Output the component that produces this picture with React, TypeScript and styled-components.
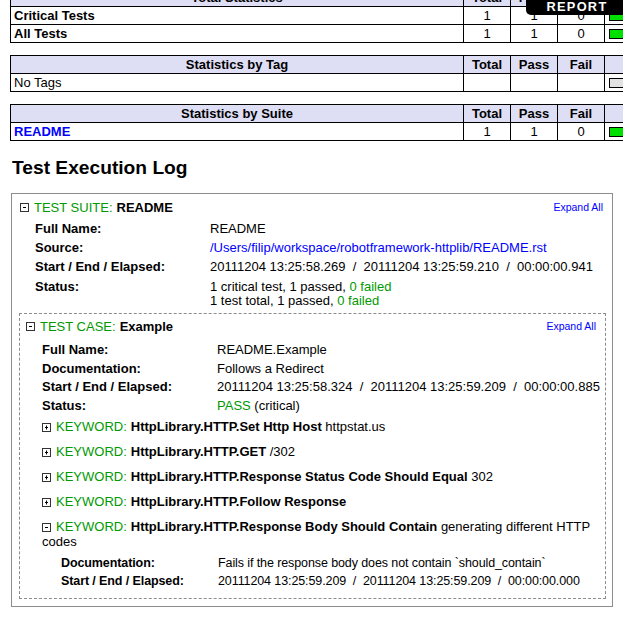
import React from "react";
import styled, { createGlobalStyle } from "styled-components";

const Global = createGlobalStyle`
  html, body { margin: 0; padding: 0; overflow: hidden; background: #fff; }
  body { font-family: "Liberation Sans", Arial, Helvetica, sans-serif; font-size: 13px; color: #000; }
`;

const Page = styled.div`
  margin-top: -12px;
  padding-left: 10px;
  width: 603px;
`;

const StatTable = styled.table`
  border-collapse: separate;
  border-spacing: 0;
  table-layout: fixed;
  width: 796px;
  margin-bottom: 12px;
  border-top: 1px solid #000;
  border-left: 1px solid #000;
`;

const HeadCell = styled.th<{ $w: number }>`
  width: ${(p) => p.$w}px;
  height: 17px;
  padding: 0;
  border-right: 1px solid #000;
  border-bottom: 1px solid #000;
  background: #dedef4;
  font-weight: bold;
  line-height: 17px;
  text-align: center;
`;

const NameCell = styled.td<{ $bold?: boolean }>`
  height: 17px;
  padding: 0 0 0 3px;
  border-right: 1px solid #000;
  border-bottom: 1px solid #000;
  line-height: 17px;
  font-weight: ${(p) => (p.$bold ? "bold" : "normal")};
  white-space: nowrap;
`;

const NumCell = styled.td`
  height: 17px;
  padding: 0;
  border-right: 1px solid #000;
  border-bottom: 1px solid #000;
  line-height: 17px;
  text-align: center;
`;

const GraphCell = styled.td`
  height: 17px;
  padding: 0 4px;
  border-right: 1px solid #000;
  border-bottom: 1px solid #000;
  vertical-align: middle;
`;

const Bar = styled.div<{ $pass: boolean }>`
  height: 8px;
  border: 1px solid #000;
  background: ${(p) => (p.$pass ? "#00e000" : "#e2e2e2")};
`;

const SuiteLink = styled.a`
  color: #0000ff;
  text-decoration: none;
  font-weight: bold;
`;

const Badge = styled.a`
  position: absolute;
  top: 0;
  left: 526px;
  width: 102px;
  height: 15px;
  background: #000;
  color: #fff;
  border-bottom-left-radius: 5px;
  font-weight: bold;
  font-size: 12.8px;
  letter-spacing: 0.1em;
  line-height: 13px;
  text-align: center;
  text-decoration: none;
`;

const Heading = styled.h2`
  margin: 15px 0 13px 2px;
  font-size: 19.2px;
  line-height: 24px;
  font-weight: bold;
`;

const SuiteBox = styled.div`
  margin-left: 1px;
  border: 1px solid #8c8c8c;
  padding: 6px 9px 7px 8px;
`;

const TestBox = styled.div`
  margin: 2px -3px 0 -1px;
  border: 1px dashed #8c8c8c;
  padding: 5px 9px 8px 6px;
`;

const Header = styled.div`
  display: flex;
  align-items: center;
  line-height: 15px;
`;

const HeaderMain = styled.div`
  flex: 1;
  display: flex;
  align-items: center;
`;

const Kind = styled.span`
  color: #009900;
  margin-left: 5px;
  margin-right: 4px;
`;

const ExpandAll = styled.a`
  color: #0000ff;
  font-size: 10.5px;
  text-decoration: none;
`;

const Meta = styled.div<{ $label: number; $indent: number; $top: number; $pad: number }>`
  display: grid;
  grid-template-columns: ${(p) => p.$label}px 1fr;
  padding-left: ${(p) => p.$indent}px;
  margin-top: ${(p) => p.$top}px;
  line-height: 14.5px;
  & > div {
    padding: ${(p) => p.$pad}px 0;
  }
`;

const MetaLabel = styled.div`
  font-weight: bold;
`;

const MetaValue = styled.div`
  white-space: nowrap;
`;

const SmallMeta = styled(Meta)`
  font-size: 12.5px;
  letter-spacing: -0.1px;
  line-height: 14px;
`;

const Green = styled.span`
  color: #009900;
`;

const PathLink = styled.a`
  color: #0000ff;
  text-decoration: none;
`;

const Keywords = styled.div`
  padding-left: 16px;
`;

const Keyword = styled.div`
  padding: 3px 0 7px;
  line-height: 15px;
  &:last-child {
    padding-bottom: 0;
  }
`;

const ToggleBox = styled.svg`
  width: 9px;
  height: 9px;
  flex: none;
  vertical-align: -1px;
`;

const Toggle = ({ open }: { open: boolean }) => (
  <ToggleBox viewBox="0 0 9 9">
    <rect x="0.5" y="0.5" width="8" height="8" fill="#fff" stroke="#333" />
    <line x1="3" y1="4.5" x2="6" y2="4.5" stroke="#000" />
    {!open && <line x1="4.5" y1="2.5" x2="4.5" y2="6.5" stroke="#000" />}
  </ToggleBox>
);

const KwName = styled.b``;

const StatsTable = ({
  title,
  rows,
}: {
  title: string;
  rows: { name: React.ReactNode; bold?: boolean; total?: string; pass?: string; fail?: string; bar: boolean }[];
}) => (
  <StatTable>
    <thead>
      <tr>
        <HeadCell $w={452}>{title}</HeadCell>
        <HeadCell $w={46}>Total</HeadCell>
        <HeadCell $w={46}>Pass</HeadCell>
        <HeadCell $w={46}>Fail</HeadCell>
        <HeadCell $w={200}></HeadCell>
      </tr>
    </thead>
    <tbody>
      {rows.map((r, i) => (
        <tr key={i}>
          <NameCell $bold={r.bold}>{r.name}</NameCell>
          <NumCell>{r.total}</NumCell>
          <NumCell>{r.pass}</NumCell>
          <NumCell>{r.fail}</NumCell>
          <GraphCell>
            <Bar $pass={r.bar} />
          </GraphCell>
        </tr>
      ))}
    </tbody>
  </StatTable>
);

const keywords: { name: string; args: string; open: boolean }[] = [
  { name: "HttpLibrary.HTTP.Set Http Host", args: "httpstat.us", open: false },
  { name: "HttpLibrary.HTTP.GET", args: "/302", open: false },
  { name: "HttpLibrary.HTTP.Response Status Code Should Equal", args: "302", open: false },
  { name: "HttpLibrary.HTTP.Follow Response", args: "", open: false },
];

export default function App() {
  return (
    <>
      <Global />
      <Badge href="#">REPORT</Badge>
      <Page>
        <StatsTable
          title="Total Statistics"
          rows={[
            { name: "Critical Tests", bold: true, total: "1", pass: "1", fail: "0", bar: true },
            { name: "All Tests", bold: true, total: "1", pass: "1", fail: "0", bar: true },
          ]}
        />
        <StatsTable title="Statistics by Tag" rows={[{ name: "No Tags", bar: false }]} />
        <StatsTable
          title="Statistics by Suite"
          rows={[{ name: <SuiteLink href="#">README</SuiteLink>, total: "1", pass: "1", fail: "0", bar: true }]}
        />
        <Heading>Test Execution Log</Heading>
        <SuiteBox>
          <Header>
            <HeaderMain>
              <Toggle open />
              <Kind>TEST SUITE:</Kind>
              <b>README</b>
            </HeaderMain>
            <ExpandAll href="#">Expand All</ExpandAll>
          </Header>
          <Meta $label={175} $indent={15} $top={5} $pad={2.3}>
            <MetaLabel>Full Name:</MetaLabel>
            <MetaValue>README</MetaValue>
            <MetaLabel>Source:</MetaLabel>
            <MetaValue>
              <PathLink href="#">/Users/filip/workspace/robotframework-httplib/README.rst</PathLink>
            </MetaValue>
            <MetaLabel>Start / End / Elapsed:</MetaLabel>
            <MetaValue>
              20111204 13:25:58.269&nbsp; / &nbsp;20111204 13:25:59.210&nbsp; / &nbsp;00:00:00.941
            </MetaValue>
            <MetaLabel>Status:</MetaLabel>
            <MetaValue>
              1 critical test, 1 passed, <Green>0 failed</Green>
              <br />1 test total, 1 passed, <Green>0 failed</Green>
            </MetaValue>
          </Meta>
          <TestBox>
            <Header>
              <HeaderMain>
                <Toggle open />
                <Kind>TEST CASE:</Kind>
                <b>Example</b>
              </HeaderMain>
              <ExpandAll href="#">Expand All</ExpandAll>
            </Header>
            <Meta $label={175} $indent={16} $top={7} $pad={2.1}>
              <MetaLabel>Full Name:</MetaLabel>
              <MetaValue>README.Example</MetaValue>
              <MetaLabel>Documentation:</MetaLabel>
              <MetaValue>Follows a Redirect</MetaValue>
              <MetaLabel>Start / End / Elapsed:</MetaLabel>
              <MetaValue>
                20111204 13:25:58.324&nbsp; / &nbsp;20111204 13:25:59.209&nbsp; / &nbsp;00:00:00.885
              </MetaValue>
              <MetaLabel>Status:</MetaLabel>
              <MetaValue>
                <Green>PASS</Green> (critical)
              </MetaValue>
            </Meta>
            <Keywords>
              {keywords.map((k) => (
                <Keyword key={k.name}>
                  <Toggle open={k.open} />
                  <Kind>KEYWORD:</Kind>
                  <KwName>{k.name}</KwName> {k.args}
                </Keyword>
              ))}
              <Keyword>
                <Toggle open />
                <Kind>KEYWORD:</Kind>
                <KwName>HttpLibrary.HTTP.Response Body Should Contain</KwName> generating different HTTP codes
                <SmallMeta $label={157} $indent={19} $top={5} $pad={2}>
                  <MetaLabel>Documentation:</MetaLabel>
                  <MetaValue>Fails if the response body does not contain `should_contain`</MetaValue>
                  <MetaLabel>Start / End / Elapsed:</MetaLabel>
                  <MetaValue>
                    20111204 13:25:59.209&nbsp; / &nbsp;20111204 13:25:59.209&nbsp; / &nbsp;00:00:00.000
                  </MetaValue>
                </SmallMeta>
              </Keyword>
            </Keywords>
          </TestBox>
        </SuiteBox>
      </Page>
    </>
  );
}
